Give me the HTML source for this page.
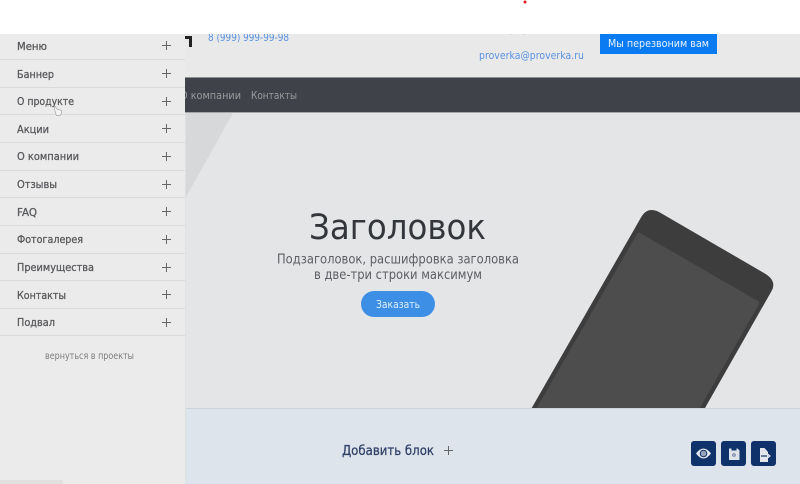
<!DOCTYPE html>
<html lang="ru"><head><meta charset="utf-8"><title>Редактор</title>
<style>
html,body{margin:0;padding:0;width:800px;height:484px;overflow:hidden;background:#fff}
svg{display:block;filter:blur(.35px)}
text{font-family:"DejaVu Sans","Liberation Sans",sans-serif}
.m{font-size:11px;fill:#58595c;stroke:#58595c;stroke-width:.3px}
</style></head><body>
<svg width="800" height="484" viewBox="0 0 800 484" xmlns="http://www.w3.org/2000/svg" overflow="hidden">
<rect width="800" height="484" fill="#fff"/>
<rect y="34" width="800" height="43" fill="#e9e9ea"/>
<rect y="77" width="800" height="36" fill="#3f4248"/>
<rect y="77" width="800" height="1" fill="#8f9094"/>
<rect y="112" width="800" height="1" fill="#a5a6a9"/>
<rect y="113" width="800" height="295" fill="#e4e5e7"/>
<polygon points="186,113 233,113 186,197" fill="#d7d8da"/>
<rect y="408" width="800" height="76" fill="#dee4ec"/>
<rect y="408" width="800" height="1" fill="#ccd3de"/>
<path d="M185 36h7v11h-3v-8h-4z" fill="#222"/>
<text x="208" y="41" font-size="11" fill="#5a93e0" lengthAdjust="spacingAndGlyphs" textLength="81">8 (999) 999-99-98</text>
<text x="503" y="33" font-size="11" fill="#5a5a5a" lengthAdjust="spacingAndGlyphs" textLength="47">8 (999) 999-99</text>
<rect x="600" y="34" width="117" height="20" fill="#0a7bf0"/>
<text x="608" y="47" font-size="11" fill="#e8f2ff" lengthAdjust="spacingAndGlyphs" textLength="101">Мы перезвоним вам</text>
<rect width="800" height="34" fill="#fff"/>
<circle cx="525" cy="2" r="1.500" fill="#e02020"/>
<text x="479" y="59" font-size="11" fill="#5a93e0" lengthAdjust="spacingAndGlyphs" textLength="105">proverka@proverka.ru</text>
<text x="180" y="99" font-size="11" fill="#9a9b9e" lengthAdjust="spacingAndGlyphs" textLength="61">О компании</text>
<text x="251" y="99" font-size="11" fill="#9a9b9e" lengthAdjust="spacingAndGlyphs" textLength="46">Контакты</text>
<text x="309" y="239" font-size="35" fill="#33363b" lengthAdjust="spacingAndGlyphs" textLength="177">Заголовок</text>
<text x="277" y="263.500" font-size="13.500" fill="#5b5e63" lengthAdjust="spacingAndGlyphs" textLength="242">Подзаголовок, расшифровка заголовка</text>
<text x="314" y="279" font-size="13.500" fill="#5b5e63" lengthAdjust="spacingAndGlyphs" textLength="168">в две-три строки максимум</text>
<rect x="361" y="291" width="74" height="26" rx="13" fill="#3d8fe6"/>
<text x="376" y="308" font-size="11" fill="#dfeeff" lengthAdjust="spacingAndGlyphs" textLength="44">Заказать</text>
<path d="M531.700 408 L640.700 218 Q647 206 659 212 L764 273 Q778 281 771 292 L705 408 Z" fill="#3d3d3d"/>
<path d="M536.700 408 L637 234 Q638 232 640 233 L758 301 Q760 302 759 304 L700 408 Z" fill="#4d4d4d"/>
<rect width="185" height="450" y="34" fill="#ebebeb"/>
<rect x="185" y="113" width="1" height="371" fill="#dfe0e3"/>
<g fill="#dadada">
<rect y="59" width="185" height="1"/><rect y="87" width="185" height="1"/><rect y="114" width="185" height="1"/><rect y="142" width="185" height="1"/><rect y="170" width="185" height="1"/><rect y="197" width="185" height="1"/><rect y="225" width="185" height="1"/><rect y="253" width="185" height="1"/><rect y="280" width="185" height="1"/><rect y="308" width="185" height="1"/><rect y="335" width="185" height="1"/>
</g>
<text class="m" x="17" y="50" lengthAdjust="spacingAndGlyphs" textLength="30">Меню</text>
<text class="m" x="17" y="78" lengthAdjust="spacingAndGlyphs" textLength="37">Баннер</text>
<text class="m" x="17" y="105" lengthAdjust="spacingAndGlyphs" textLength="57">О продукте</text>
<text class="m" x="17" y="133" lengthAdjust="spacingAndGlyphs" textLength="32">Акции</text>
<text class="m" x="17" y="160" lengthAdjust="spacingAndGlyphs" textLength="62">О компании</text>
<text class="m" x="17" y="188" lengthAdjust="spacingAndGlyphs" textLength="40">Отзывы</text>
<text class="m" x="17" y="216" lengthAdjust="spacingAndGlyphs" textLength="20">FAQ</text>
<text class="m" x="17" y="243" lengthAdjust="spacingAndGlyphs" textLength="66">Фотогалерея</text>
<text class="m" x="17" y="271" lengthAdjust="spacingAndGlyphs" textLength="77">Преимущества</text>
<text class="m" x="17" y="299" lengthAdjust="spacingAndGlyphs" textLength="49">Контакты</text>
<text class="m" x="17" y="326" lengthAdjust="spacingAndGlyphs" textLength="38">Подвал</text>
<g stroke="#666" stroke-width="1" fill="none">
<path d="M162 45.500h9M166.500 41v9"/><path d="M162 73.500h9M166.500 69v9"/><path d="M162 101.500h9M166.500 97v9"/><path d="M162 128.500h9M166.500 124v9"/><path d="M162 156.500h9M166.500 152v9"/><path d="M162 184.500h9M166.500 180v9"/><path d="M162 211.500h9M166.500 207v9"/><path d="M162 239.500h9M166.500 235v9"/><path d="M162 267.500h9M166.500 263v9"/><path d="M162 294.500h9M166.500 290v9"/><path d="M162 322.500h9M166.500 318v9"/>
</g>
<path d="M54 107l1.500 6 1 2.500h3.500l1.500-2v-3l-3-1-2-.5-1-2.500z" fill="#f4f4f4" stroke="#a5a5a5" stroke-width=".7"/>
<text x="45" y="359" font-size="10" fill="#7d7d7d" lengthAdjust="spacingAndGlyphs" textLength="89">вернуться в проекты</text>
<rect y="480" width="63" height="4" fill="#e0e0e0"/>
<text x="342" y="455" font-size="13" fill="#2e3f66" stroke="#2e3f66" stroke-width=".25" lengthAdjust="spacingAndGlyphs" textLength="92">Добавить блок</text>
<path d="M444 450.500h9M448.500 446v9" stroke="#666" stroke-width="1" fill="none"/>
<rect x="691" y="441" width="25" height="25" rx="3" fill="#0f326b"/>
<rect x="721" y="441" width="25" height="25" rx="3" fill="#0f326b"/>
<rect x="751" y="441" width="25" height="25" rx="3" fill="#0f326b"/>
<path d="M696 453.500Q703.500 443.500 711 453.500Q703.500 463.500 696 453.500Z" fill="#e4e7ec"/>
<circle cx="703.500" cy="453.500" r="3.800" fill="#0f326b"/><circle cx="703.500" cy="453.500" r="2.800" fill="#98a4ba"/>
<path d="M729 448.500h8.500l2 2v9.500h-10.500z" fill="#dfe3ea"/><rect x="731.500" y="448.500" width="5" height="2" fill="#0f326b"/><circle cx="734" cy="455" r="1.800" fill="#6a7da0"/><circle cx="734" cy="455" r=".8" fill="#dfe3ea"/>
<path d="M760 448h4.500l3.500 4v10h-8z" fill="#e4e7ec"/><path d="M761 456h6" stroke="#0f326b" stroke-width="1.200" fill="none"/><path d="M767 456h3M768 454.200l2 1.800-2 1.800" stroke="#e4e7ec" stroke-width="1.100" fill="none"/>
</svg>
</body></html>
